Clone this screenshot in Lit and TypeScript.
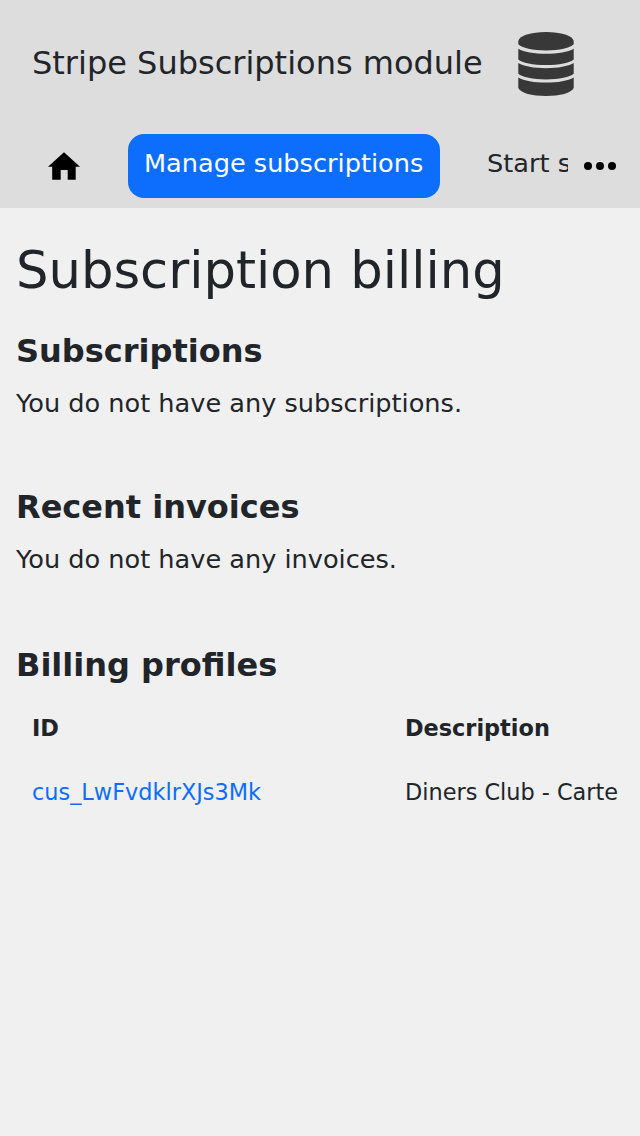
import { LitElement, html, css } from "lit";
import { customElement } from "lit/decorators.js";

@customElement("app-root")
class AppRoot extends LitElement {
  static styles = css`
    :host { display: block; min-height: 1136px; background: #f0f0f0; color: #212529; font-family: "DejaVu Sans", sans-serif; font-size: 25.6px; overflow: hidden; width: 640px; }
    * { box-sizing: border-box; }
    header { background: #ddd; height: 208px; }
    .brand { display: flex; align-items: center; height: 128px; padding-left: 32px; font-size: 32px; white-space: nowrap; }
    .brand span { width: 482px; line-height: 48px; padding-bottom: 2px; }
    .brand svg { width: 64px; height: 64px; }
    nav { display: flex; height: 80px; padding-top: 6px; white-space: nowrap; }
    .home { width: 128px; height: 64px; padding-left: 48px; padding-top: 16px; }
    .tab { height: 64px; line-height: 58px; }
    .active { width: 312px; padding-left: 16px; border-radius: 16px; background: #0d6efd; color: #fff; }
    .next { width: 128px; padding-left: 47px; overflow: hidden; }
    .more { padding: 16px; height: 64px; }
    svg { display: block; }
    main { padding: 31px 16px 0; }
    h1, h2, p { margin: 0; font-weight: 400; white-space: nowrap; }
    h1 { font-size: 51.2px; line-height: 62px; }
    h2 { font-size: 32px; font-weight: 700; line-height: 40px; }
    .plans { margin-top: 30px; }
    .invoices { margin-top: 64px; }
    .profiles { margin-top: 66px; }
    p { line-height: 40px; margin-top: 12px; }
    .table { display: grid; grid-template-columns: 373px 1fr; font-size: 22.4px; padding-left: 16px; margin-top: 11px; white-space: nowrap; overflow: hidden; line-height: 64px; }
    .head { font-weight: 700; }
    a { color: #0d6efd; text-decoration: none; }
    .desc { overflow: hidden; }
  `;
  render() {
    return html`
      <header>
        <div class="brand"><span>Stripe Subscriptions module</span>
          <svg viewBox="0 0 64 64" fill="#383838"><path d="M4.300 9C5.500 3.500 17 0 32 0s26.500 3.500 27.700 9v3.300C56.500 16 45 18.400 32 18.400S7.500 16 4.300 12.300z"/><path d="M4.300 16.700C10 20 20 21.700 32 21.700s22-1.700 27.700-5v10.800C56 31 45 33 32 33S8 31 4.300 27.500z"/><path d="M4.300 31C10 34.300 20 36.200 32 36.200S54 34.300 59.700 31v10.800C56 45.300 45 47.400 32 47.400S8 45.300 4.300 41.800z"/><path d="M4.300 45.400C10 48.700 20 50.600 32 50.600s22-1.900 27.700-5.200V56C57.500 61 46 64 32 64S6.500 61 4.300 56z"/></svg>
        </div>
        <nav>
          <div class="home"><svg width="32" height="32" viewBox="0 0 32 32"><path d="M16 2.200 0 16.700h4.200V29.800h8.500V20h7v9.800h8V16.700H32z"/></svg></div>
          <div class="tab active">Manage subscriptions</div>
          <div class="tab next">Start subscription</div>
          <div class="more"><svg width="32" height="32" viewBox="0 0 32 32"><circle cx="4" cy="16" r="4"/><circle cx="16" cy="16" r="4"/><circle cx="28" cy="16" r="4"/></svg></div>
        </nav>
      </header>
      <main>
        <h1>Subscription billing</h1>
        <h2 class="plans">Subscriptions</h2>
        <p>You do not have any subscriptions.</p>
        <h2 class="invoices">Recent invoices</h2>
        <p>You do not have any invoices.</p>
        <h2 class="profiles">Billing profiles</h2>
        <div class="table">
          <div class="head">ID</div><div class="head">Description</div>
          <a>cus_LwFvdklrXJs3Mk</a><div class="desc">Diners Club - Carte</div>
        </div>
      </main>`;
  }
}
